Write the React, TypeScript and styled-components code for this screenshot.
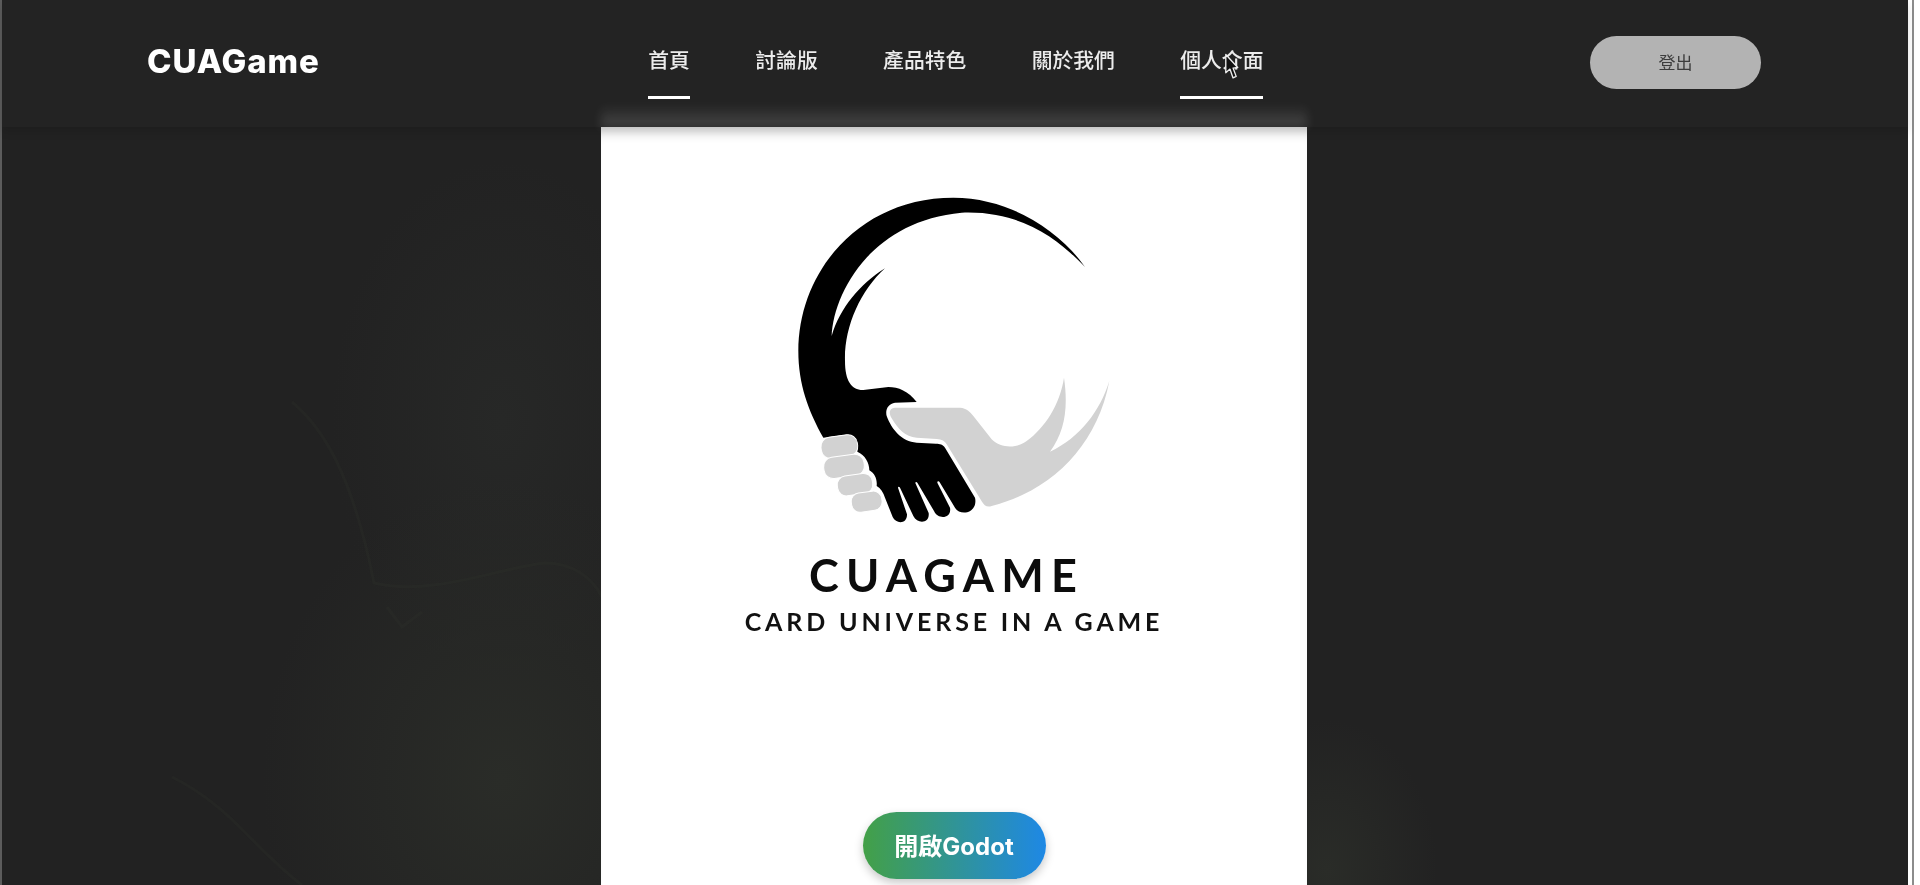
import React, { FC } from "react";
import styled, { createGlobalStyle } from "styled-components";

const NAV_ITEMS = [
  { label: "首頁", active: true },
  { label: "討論版", active: false },
  { label: "產品特色", active: false },
  { label: "關於我們", active: false },
  { label: "個人介面", active: true },
];

const FINGERS = [
  { cx: 208, cy: 797, w: 110, h: 64 },
  { cx: 222, cy: 856, w: 122, h: 64 },
  { cx: 255, cy: 911, w: 106, h: 60 },
  { cx: 290, cy: 962, w: 92, h: 58 },
];

const Logo: FC = () => (
  <LogoSvg viewBox="0 0 1080 1080">
    <path
      fill="#000"
      d="M945 258 C870 150 720 50 550 50 C270 50 85 270 85 510 C85 610 115 690 160 770 L228 761 C250 762 264 780 262 812 C285 822 298 845 298 868 C315 878 322 895 320 915 C332 922 340 935 345 950 L368 1008 C378 1030 412 1030 411 1000 L384 920 C384 916 388 916 390 920 L430 1005 C442 1030 480 1028 476 996 L436 906 C436 902 440 902 442 905 L492 990 C505 1018 546 1012 540 980 L502 905 C502 900 507 900 509 904 L555 980 C572 1008 625 995 615 950 L525 800 C518 790 510 788 498 788 L440 785 C395 782 365 745 350 705 C345 685 355 668 375 665 L440 663 C415 630 385 618 355 618 L280 627 C245 628 225 600 225 540 C222 440 270 330 345 262 C270 310 210 380 185 465 C190 340 300 120 575 95 C760 88 870 180 945 258 Z"
    />
    {FINGERS.map((f) => (
      <rect
        key={f.cy}
        x={f.cx - f.w / 2}
        y={f.cy - f.h / 2}
        width={f.w}
        height={f.h}
        rx={f.h / 2.3}
        fill="#d2d2d2"
        stroke="#fff"
        strokeWidth="3"
        transform={`rotate(-8 ${f.cx} ${f.cy})`}
      />
    ))}
    <path
      fill="#d2d2d2"
      d="M375 680 L570 680 C590 682 600 692 610 705 L665 775 C695 805 745 800 770 780 C825 740 870 670 882 590 C895 680 885 750 840 812 C930 770 990 690 1018 600 C980 800 840 930 665 975 C650 980 642 972 636 962 L530 790 C525 780 515 775 500 774 L440 770 C405 768 385 745 365 712 C355 695 358 682 375 680 Z"
    />
  </LogoSvg>
);

const App: FC = () => {
  return (
    <Page>
      <GlobalStyle />
      <LeftEdge />
      <Main>
        <Backdrop viewBox="0 0 1906 758" preserveAspectRatio="none">
          <g fill="none" stroke="#34362f" strokeOpacity="0.22" strokeWidth="3">
            <path d="M290 275 C320 300 350 345 372 456 C430 470 500 440 543 436 C570 436 590 450 600 470" />
            <path d="M170 650 C230 680 250 720 300 758" />
            <path d="M385 480 L400 500 L420 485" />
          </g>
        </Backdrop>
        <Header>
          <Brand>CUAGame</Brand>
          <Nav>
            {NAV_ITEMS.map((item) => (
              <NavLink key={item.label} $active={item.active}>
                {item.label}
                {item.label === "個人介面" && (
                  <Cursor viewBox="0 0 14 26">
                    <path
                      d="M1.5 1.5 L1.5 19 L5.5 15.5 L8.5 24 L11.5 22.5 L8.5 14.5 L13 14 Z"
                      fill="#111"
                      stroke="#eee"
                      strokeWidth="1.3"
                      strokeLinejoin="round"
                    />
                  </Cursor>
                )}
              </NavLink>
            ))}
          </Nav>
          <LogoutButton>登出</LogoutButton>
        </Header>
        <Card>
          <Logo />
          <LogoTitle>CUAGAME</LogoTitle>
          <LogoSubtitle>CARD UNIVERSE IN A GAME</LogoSubtitle>
          <GodotButton>開啟Godot</GodotButton>
        </Card>
      </Main>
      <RightEdge />
    </Page>
  );
};

export default App;

//---------------------------------styled component-----------------------------------
const GlobalStyle = createGlobalStyle`
  html, body {
    margin: 0;
    height: 885px;
    overflow: hidden;
    background: #fff;
  }
  #root {
    height: 885px;
    filter: blur(0.45px);
  }
`;

const Page = styled.div`
  display: flex;
  width: 1920px;
  height: 885px;
  overflow: hidden;
  font-family: "Inter", "Noto Sans CJK TC", sans-serif;
`;

const LeftEdge = styled.div`
  width: 2px;
  background: #5c5c5c;
`;

const RightEdge = styled.div`
  width: 12px;
  box-sizing: border-box;
  background: #fff;
  border-right: 2px solid #fff;
  box-shadow: inset -4px 0 0 #fff, inset -6px 0 0 #8c8c8c;
`;

const Main = styled.div`
  position: relative;
  flex: 1;
  display: flex;
  flex-direction: column;
  background:
    radial-gradient(ellipse 240px 300px at 500px 780px, #2a2c28 0%, rgba(42, 44, 40, 0) 100%),
    radial-gradient(ellipse 170px 260px at 500px 420px, #272827 0%, rgba(39, 40, 39, 0) 100%),
    radial-gradient(ellipse 110px 150px at 1325px 870px, #2a2c28 0%, rgba(42, 44, 40, 0) 100%),
    #222222;
`;

const Backdrop = styled.svg`
  position: absolute;
  left: 0;
  top: 127px;
  width: 100%;
  height: 758px;
`;

const Header = styled.header`
  position: relative;
  height: 127px;
  box-sizing: border-box;
  flex-shrink: 0;
  display: flex;
  justify-content: space-between;
  align-items: flex-start;
  padding: 36px 147px 0 145px;
  background: #232323;
  box-shadow: 0 5px 8px rgba(0, 0, 0, 0.12);
`;

const Brand = styled.div`
  height: 50px;
  line-height: 50px;
  font-size: 33px;
  font-weight: 800;
  letter-spacing: 0.9px;
  color: #fff;
`;

const Nav = styled.nav`
  display: flex;
  gap: 65.4px;
  margin-top: 10px;
  margin-left: 2px;
`;

const NavLink = styled.a<{ $active: boolean }>`
  position: relative;
  height: 30px;
  line-height: 30px;
  padding-bottom: 20px;
  font-size: 20.8px;
  font-weight: 500;
  color: #ececec;
  border-bottom: 3px solid ${({ $active }) => ($active ? "#fff" : "transparent")};
`;

const Cursor = styled.svg`
  position: absolute;
  left: 44px;
  top: 7px;
  width: 15px;
  height: 27px;
`;

const LogoutButton = styled.button`
  width: 171px;
  height: 53px;
  padding: 0 0 2px;
  border: none;
  border-radius: 27px;
  background: #b3b3b3;
  color: #3c3c3c;
  font-family: inherit;
  font-size: 17px;
`;

const Card = styled.main`
  position: relative;
  width: 706px;
  margin: 0 auto;
  transform: translateX(-1px);
  flex: 1;
  box-sizing: border-box;
  padding-top: 54px;
  display: flex;
  flex-direction: column;
  align-items: center;
  background: #fff;
  box-shadow: inset 0 14px 12px -10px rgba(0, 0, 0, 0.3);

  &::before {
    content: "";
    position: absolute;
    left: 0;
    right: 0;
    bottom: 100%;
    height: 22px;
    background: linear-gradient(to bottom, rgba(255, 255, 255, 0), rgba(255, 255, 255, 0.17));
    filter: blur(5px);
  }
`;

const LogoSvg = styled.svg`
  width: 360px;
  height: 360px;
  flex-shrink: 0;
  margin-right: 8px;
`;

const LogoTitle = styled.div`
  margin-top: 6px;
  margin-right: 15px;
  font-family: "Lato", sans-serif;
  font-size: 45px;
  line-height: 56px;
  font-weight: 700;
  letter-spacing: 7.2px;
  color: #0c0c0c;
`;

const LogoSubtitle = styled.div`
  margin-top: 1px;
  font-family: "Lato", sans-serif;
  font-size: 25px;
  line-height: 34px;
  font-weight: 700;
  letter-spacing: 3.85px;
  white-space: nowrap;
  color: #111;
`;

const GodotButton = styled.button`
  margin-top: 174px;
  width: 183px;
  height: 67px;
  flex-shrink: 0;
  padding: 0 0 3px;
  border: none;
  border-radius: 34px;
  background: linear-gradient(to right, #43a047, #1e88e5);
  box-shadow: 0 4px 10px rgba(0, 0, 0, 0.22);
  color: #fff;
  font-family: "Inter", "Noto Sans CJK TC", sans-serif;
  font-size: 24px;
  font-weight: 700;
`;
